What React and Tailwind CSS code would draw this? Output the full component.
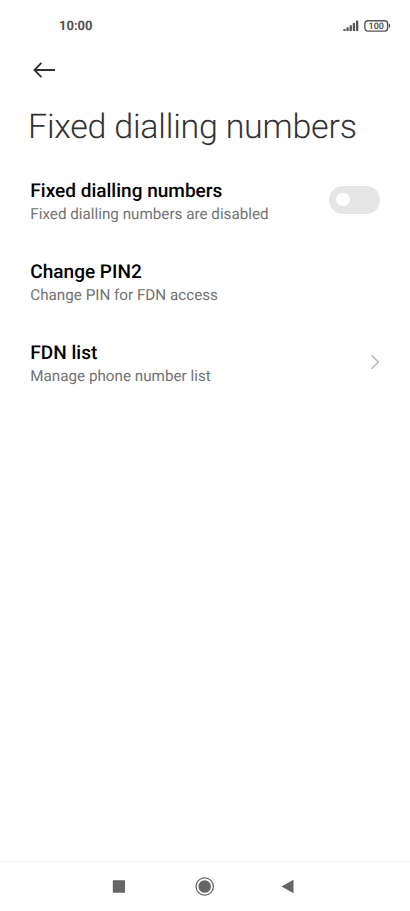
const settings = [
  { title: 'Fixed dialling numbers', detail: 'Fixed dialling numbers are disabled', control: 'switch' },
  { title: 'Change PIN2', detail: 'Change PIN for FDN access' },
  { title: 'FDN list', detail: 'Manage phone number list', control: 'link' },
];

function StatusBar() {
  return (
    <header className="flex h-[52px] items-center justify-between pr-[20px] pl-[59px]">
      <span className="pt-0.5 text-[13px] leading-4 font-bold text-[#505050]">10:00</span>
      <div className="flex items-center gap-[5px]">
        <svg width="16" height="12" viewBox="0 0 16 12" fill="#555">
          <rect x="0.3" y="9" width="2.3" height="2" rx=".5" />
          <rect x="3.4" y="7.2" width="2.3" height="3.8" rx=".5" />
          <rect x="6.6" y="5.2" width="2.3" height="5.8" rx=".5" />
          <rect x="9.8" y="3" width="2.3" height="8" rx=".5" />
          <rect x="13" y="0.6" width="2.3" height="10.4" rx=".5" />
        </svg>
        <svg width="26" height="12" viewBox="0 0 26 12">
          <rect x="0.9" y="0.7" width="22.7" height="10.4" rx="2.8" fill="none" stroke="#555" strokeWidth="1.4" />
          <rect x="24.7" y="4" width="1.3" height="3.6" rx=".6" fill="#555" />
          <text x="12.2" y="9.1" textAnchor="middle" fontSize="9" fontWeight="500" fill="#444">
            100
          </text>
        </svg>
      </div>
    </header>
  );
}

function Switch() {
  return (
    <button role="switch" aria-checked="false" className="mb-0.5 flex h-7 w-[51px] items-center rounded-full bg-[#e6e6e6] pl-[7px]">
      <span className="size-[13.5px] rounded-full bg-white" />
    </button>
  );
}

function Setting({ title, detail, control }) {
  return (
    <div className="flex h-[81px] items-center justify-between pr-[30px] pl-[30.3px]">
      <div className="pt-0.5">
        <h2 className="text-[19.05px] leading-6 font-medium text-black">{title}</h2>
        <p className="text-[15.22px] leading-[22px] text-[#737373]">{detail}</p>
      </div>
      {control === 'switch' && <Switch />}
      {control === 'link' && (
        <svg className="mb-0.5" width="10" height="16" viewBox="0 0 10 16" fill="none" stroke="#b5b5b5" strokeWidth="1.4">
          <path d="M1.5 1.2 8.3 8 1.5 14.8" />
        </svg>
      )}
    </div>
  );
}

export default function App() {
  return (
    <div className="flex h-[911px] w-[410px] flex-col bg-white font-['Roboto',sans-serif] [text-rendering:geometricPrecision]">
      <StatusBar />
      <div className="flex h-9 items-center pl-[33px]">
        <svg width="23" height="18" viewBox="0 0 23 18" fill="none" stroke="#303030" strokeWidth="1.8">
          <path d="M22 9H1.5M8.4 1.8 1.4 9l7 7.2" />
        </svg>
      </div>
      <h1 className="mt-[17px] pl-[28px] text-[34px] leading-[44px] font-light tracking-[-0.24px] whitespace-nowrap text-[#333]">
        Fixed dialling numbers
      </h1>
      <main className="mt-[11px] flex-1">
        {settings.map((item) => (
          <Setting key={item.title} {...item} />
        ))}
      </main>
      <nav className="h-[50px] border-t border-[#f2f2f2]">
        <svg width="410" height="49" viewBox="0 0 410 49" fill="#666">
          <rect x="112.8" y="18.2" width="12.2" height="12.5" rx=".5" />
          <circle cx="204.7" cy="24.5" r="6.3" />
          <circle cx="204.7" cy="24.5" r="8.7" fill="none" stroke="#666" strokeWidth="1.3" />
          <path d="M281.5 24.5 293.5 17.7V31.3Z" />
        </svg>
      </nav>
    </div>
  );
}
